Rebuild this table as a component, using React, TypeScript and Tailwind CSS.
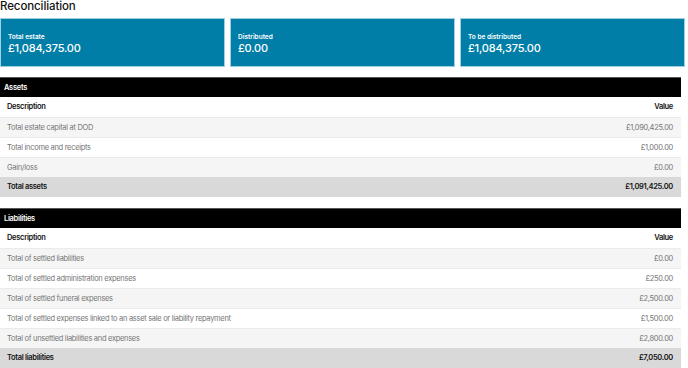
import React from 'react';

type Row = { label: string; value: string };

const summary = [
  { label: 'Total estate', value: '£1,084,375.00' },
  { label: 'Distributed', value: '£0.00' },
  { label: 'To be distributed', value: '£1,084,375.00' },
];

const assets: Row[] = [
  { label: 'Total estate capital at DOD', value: '£1,090,425.00' },
  { label: 'Total income and receipts', value: '£1,000.00' },
  { label: 'Gain/loss', value: '£0.00' },
];

const liabilities: Row[] = [
  { label: 'Total of settled liabilities', value: '£0.00' },
  { label: 'Total of settled administration expenses', value: '£250.00' },
  { label: 'Total of settled funeral expenses', value: '£2,500.00' },
  { label: 'Total of settled expenses linked to an asset sale or liability repayment', value: '£1,500.00' },
  { label: 'Total of unsettled liabilities and expenses', value: '£2,800.00' },
];

const SectionTable: React.FC<{ title: string; rows: Row[]; total: Row }> = ({ title, rows, total }) => (
  <div className="w-[681px]">
    <div className="h-5 bg-black border-t border-[#555] flex items-center px-1 text-[7.5px] font-semibold text-white tracking-[-0.3px]">
      {title}
    </div>
    <div className="h-5 bg-white flex items-center justify-between pl-[7px] pr-2 text-[7.5px] font-semibold text-[#111] tracking-[-0.3px]">
      <span>Description</span>
      <span>Value</span>
    </div>
    {rows.map((r, i) => (
      <div
        key={r.label}
        className={`h-5 flex items-center justify-between pl-[7px] pr-2 text-[7.5px] text-[#757575] tracking-[-0.3px] border-t border-[#ebebeb] ${
          i % 2 === 0 ? 'bg-[#f5f5f5]' : 'bg-white'
        }`}
      >
        <span>{r.label}</span>
        <span>{r.value}</span>
      </div>
    ))}
    <div className="h-5 bg-[#d9d9d9] flex items-center justify-between pl-[7px] pr-2 text-[7.5px] font-semibold text-[#111] tracking-[-0.3px]">
      <span>{total.label}</span>
      <span>{total.value}</span>
    </div>
  </div>
);

export default function App() {
  return (
    <div className="w-[688px] h-[368px] overflow-hidden bg-white" style={{ fontFamily: 'Inter, "Liberation Sans", sans-serif' }}>
      <h1 className="text-[11.5px] leading-[12px] text-[#111] font-medium tracking-[-0.1px]">Reconciliation</h1>
      <div className="w-[685px] mt-[6px] grid grid-cols-3 gap-[5px]">
        {summary.map((s) => (
          <div key={s.label} className="h-[49px] bg-[#007ea7] border border-[#9fd0e2] flex flex-col justify-center pl-[7px] pt-[2px]">
            <div className="text-[6.5px] font-semibold text-white leading-[9px]">{s.label}</div>
            <div className="text-[11px] font-medium text-white leading-[13px] tracking-[-0.2px]">{s.value}</div>
          </div>
        ))}
      </div>
      <div className="mt-[10px] flex flex-col gap-[11px]">
        <SectionTable title="Assets" rows={assets} total={{ label: 'Total assets', value: '£1,091,425.00' }} />
        <SectionTable title="Liabilities" rows={liabilities} total={{ label: 'Total liabilities', value: '£7,050.00' }} />
      </div>
    </div>
  );
}
